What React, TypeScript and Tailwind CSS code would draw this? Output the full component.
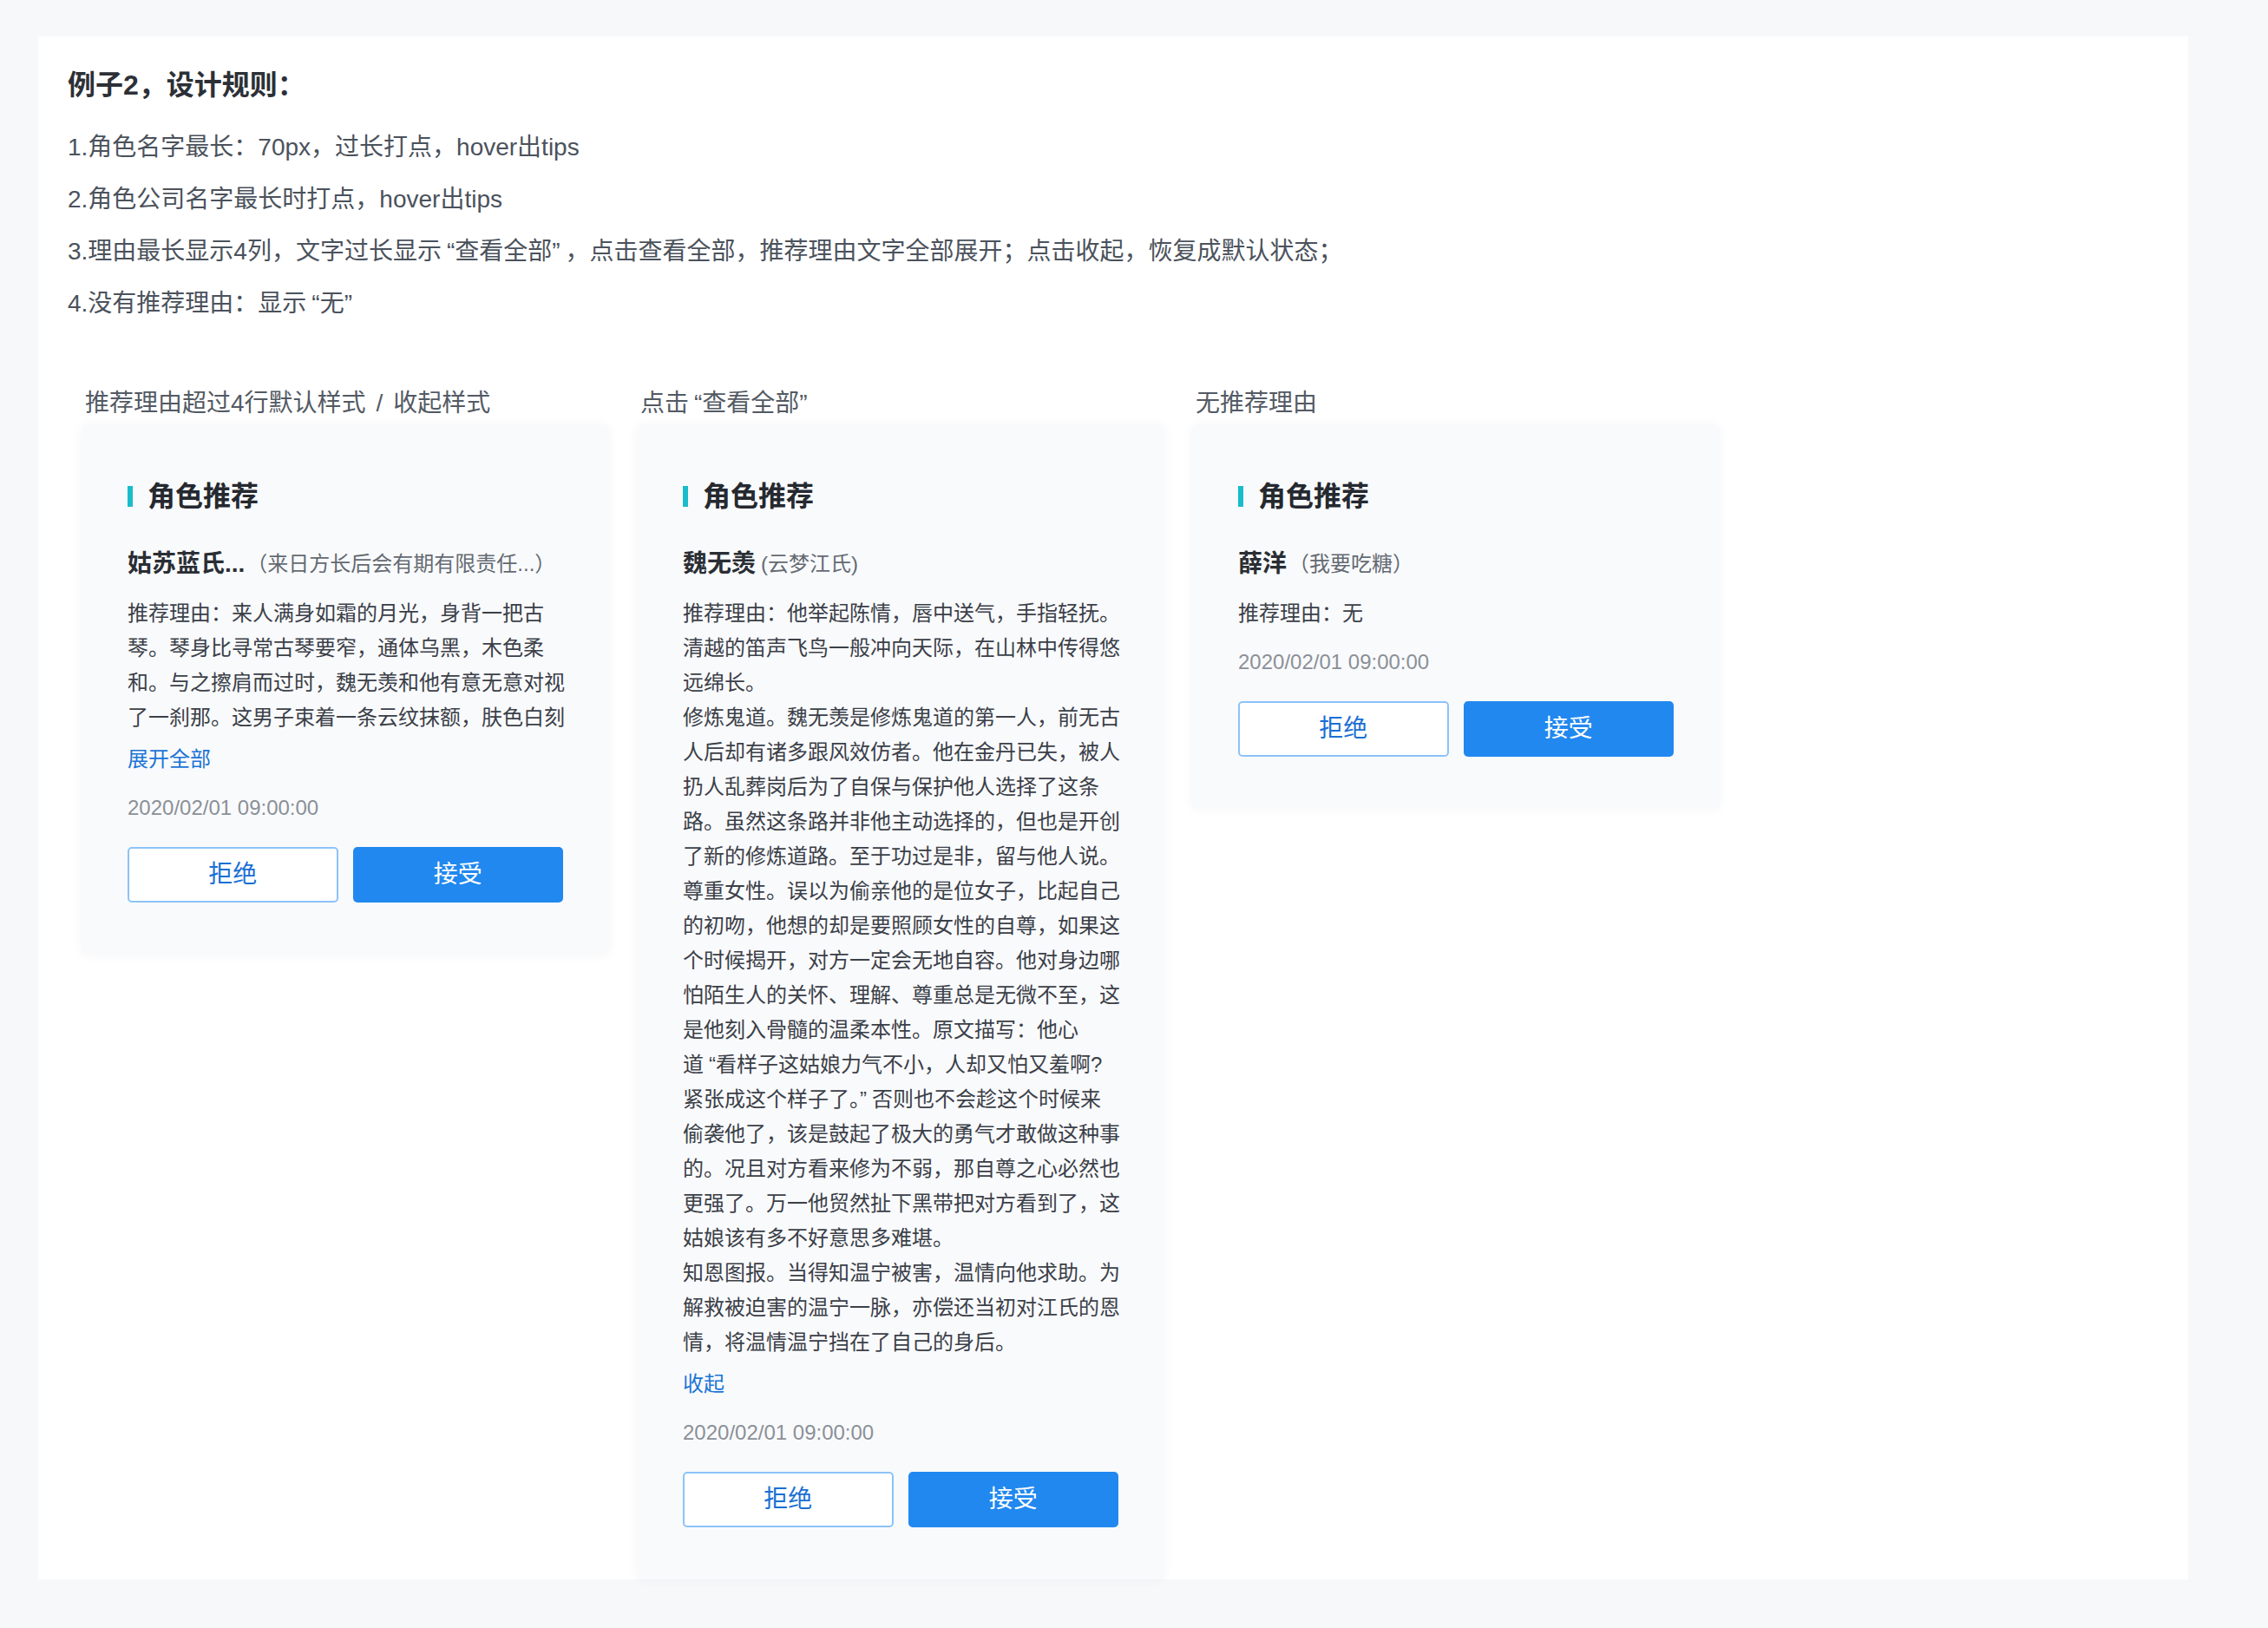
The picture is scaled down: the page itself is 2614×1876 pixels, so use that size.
import React from "react";

type Role = {
  name: string;
  org: string;
  orgTight?: boolean;
  lines: string[];
  toggle?: string;
  time: string;
};

const FONT = { fontFamily: '"Liberation Sans", "Noto Sans CJK SC", sans-serif' };

// curly quotes get a bit of breathing room on their outer side
const withQuotes = (text: string) =>
  text.split(/([“”])/).map((part, i) =>
    part === "“" ? (
      <span key={i} className="ml-[6px]">
        “
      </span>
    ) : part === "”" ? (
      <span key={i} className="mr-[6px]">
        ”
      </span>
    ) : (
      part
    )
  );

const rules = [
  "1.角色名字最长：70px，过长打点，hover出tips",
  "2.角色公司名字最长时打点，hover出tips",
  "3.理由最长显示4列，文字过长显示“查看全部”，点击查看全部，推荐理由文字全部展开；点击收起，恢复成默认状态；",
  "4.没有推荐理由：显示“无”",
];

const collapsed: Role = {
  name: "姑苏蓝氏...",
  org: "（来日方长后会有期有限责任...）",
  lines: [
    "推荐理由：来人满身如霜的月光，身背一把古",
    "琴。琴身比寻常古琴要窄，通体乌黑，木色柔",
    "和。与之擦肩而过时，魏无羡和他有意无意对视",
    "了一刹那。这男子束着一条云纹抹额，肤色白刻",
  ],
  toggle: "展开全部",
  time: "2020/02/01 09:00:00",
};

const expanded: Role = {
  name: "魏无羡",
  org: "(云梦江氏)",
  orgTight: true,
  lines: [
    "推荐理由：他举起陈情，唇中送气，手指轻抚。",
    "清越的笛声飞鸟一般冲向天际，在山林中传得悠",
    "远绵长。",
    "修炼鬼道。魏无羡是修炼鬼道的第一人，前无古",
    "人后却有诸多跟风效仿者。他在金丹已失，被人",
    "扔人乱葬岗后为了自保与保护他人选择了这条",
    "路。虽然这条路并非他主动选择的，但也是开创",
    "了新的修炼道路。至于功过是非，留与他人说。",
    "尊重女性。误以为偷亲他的是位女子，比起自己",
    "的初吻，他想的却是要照顾女性的自尊，如果这",
    "个时候揭开，对方一定会无地自容。他对身边哪",
    "怕陌生人的关怀、理解、尊重总是无微不至，这",
    "是他刻入骨髓的温柔本性。原文描写：他心",
    "道“看样子这姑娘力气不小，人却又怕又羞啊?",
    "紧张成这个样子了。”否则也不会趁这个时候来",
    "偷袭他了，该是鼓起了极大的勇气才敢做这种事",
    "的。况且对方看来修为不弱，那自尊之心必然也",
    "更强了。万一他贸然扯下黑带把对方看到了，这",
    "姑娘该有多不好意思多难堪。",
    "知恩图报。当得知温宁被害，温情向他求助。为",
    "解救被迫害的温宁一脉，亦偿还当初对江氏的恩",
    "情，将温情温宁挡在了自己的身后。",
  ],
  toggle: "收起",
  time: "2020/02/01 09:00:00",
};

const empty: Role = {
  name: "薛洋",
  org: "（我要吃糖）",
  lines: ["推荐理由：无"],
  time: "2020/02/01 09:00:00",
};

const RoleCard = ({ role }: { role: Role }) => (
  <div className="w-[608px] rounded-[6px] bg-[#f9fafc] px-[53px] pt-[60px] pb-[60px] shadow-[0_0_14px_rgba(30,45,70,0.045)]">
    <div className="flex h-[44px] items-center">
      <span className="h-[24px] w-[6px] bg-[#19bccb]" />
      <h3 className="ml-[17px] text-[32px] font-bold text-[#25292f]">角色推荐</h3>
    </div>

    <div className="mt-[36px] flex h-[40px] items-center whitespace-nowrap">
      <span className="max-w-[140px] truncate text-[28px] font-bold text-[#2a2e34]">{role.name}</span>
      <span className={`${role.orgTight ? "ml-[6px]" : "ml-[2px]"} text-[24px] text-[#646a72]`}>{role.org}</span>
    </div>

    <div className="mt-[17px] text-[24px] leading-[40px] text-[#3b4048]">
      {role.lines.map((line, i) => (
        <div key={i} className="whitespace-nowrap">
          {withQuotes(line)}
        </div>
      ))}
    </div>

    {role.toggle && (
      <div className="mt-[8px] text-[24px] leading-[40px] text-[#1b74d6]">{role.toggle}</div>
    )}

    <div className="mt-[16px] text-[24px] leading-[40px] text-[#8b9097]">{role.time}</div>

    <div className="mt-[25px] grid grid-cols-2 gap-[17px]">
      <button className="h-[64px] rounded-[5px] border-2 border-[#8cc3f8] bg-white text-[28px] text-[#1a6fd4]">
        拒绝
      </button>
      <button className="h-[64px] rounded-[5px] bg-[#2188ef] text-[28px] text-white">接受</button>
    </div>
  </div>
);

const Column = ({ label, role }: { label: React.ReactNode; role: Role }) => (
  <div className="flex w-[608px] flex-col">
    <div className="mb-[5px] pl-[4px] text-[28px] leading-[40px] text-[#535a64]">{label}</div>
    <RoleCard role={role} />
  </div>
);

export default function App() {
  return (
    <div className="min-h-[1876px] bg-[#f7f8fa] pt-[42px]" style={FONT}>
      <div className="ml-[44px] w-[2478px] bg-white px-[34px] pt-[34px]">
        <h2 className="text-[32px] leading-[44px] font-semibold text-[#2d3036]">例子2，设计规则：</h2>
        <div className="mt-[20px] text-[28px] leading-[60px] text-[#4b525c]">
          {rules.map((r) => (
            <p key={r}>{withQuotes(r)}</p>
          ))}
        </div>

        <div className="mt-[65px] flex items-start gap-[32px] pl-[16px]">
          <Column
            label={
              <>
                推荐理由超过4行默认样式<span className="mx-[12px]">/</span>收起样式
              </>
            }
            role={collapsed}
          />
          <Column label={withQuotes("点击“查看全部”")} role={expanded} />
          <Column label="无推荐理由" role={empty} />
        </div>
      </div>
    </div>
  );
}
